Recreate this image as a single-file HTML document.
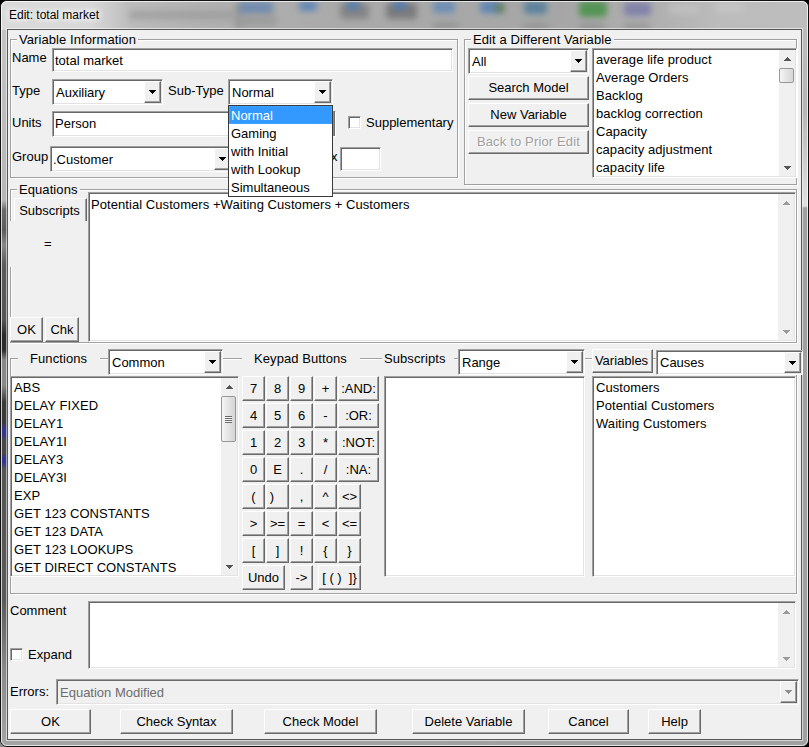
<!DOCTYPE html>
<html>
<head>
<meta charset="utf-8">
<title>Edit: total market</title>
<style>
html,body{margin:0;padding:0;}
body{width:809px;height:747px;position:relative;overflow:hidden;background:#000;font-family:"Liberation Sans",Arial,sans-serif;font-size:13px;color:#000;}
*{box-sizing:border-box;}
.a{position:absolute;}
#frame{left:0;top:0;width:809px;height:747px;background:#b4b4b4;border-radius:7px;overflow:hidden;border:1px solid #111;}
#frame .tb{left:0;top:0;width:807px;height:29px;background:linear-gradient(90deg,#dadada 0,#d8d8d8 90px,#bcbcbc 130px,#b2b2b2 200px,#aaaaaa 330px,#a6a6a6 560px,#b0b0b0 660px,#bcbcbc 720px,#bdbdbd 100%);}
#frame .bl{filter:blur(3px);border-radius:4px;opacity:.8;}
#frame .lf{left:0;top:29px;width:7px;height:716px;background:linear-gradient(180deg,#c4c4c4 0,#b6b6b6 170px,#6a6a6a 180px,#5c5c5c 200px,#888 215px,#5a5a5a 235px,#555 290px,#2a2a2a 305px,#2a2a2a 320px,#888 330px,#8a8a8a 355px,#3a3a3a 372px,#3a3a3a 392px,#35358c 399px,#35358c 404px,#484848 411px,#484848 423px,#35358c 428px,#35358c 432px,#555 440px,#5a5a5a 570px,#8a8a8a 640px,#a4a4a4 100%);}
#frame .rf{left:800px;top:29px;width:7px;height:716px;background:linear-gradient(180deg,#bcbcbc 0,#b6b6b6 80px,#dcdcdc 165px,#e0e0e0 176px,#a0a0a0 178px,#a0a0a0 100%);}
#frame .bf{left:0;top:738px;width:807px;height:7px;background:linear-gradient(90deg,#a4a4a4,#a0a0a0);}
#frame .hl{left:0;top:0;width:807px;height:745px;border:1px solid rgba(255,255,255,.72);border-radius:6px;}
#title{letter-spacing:0;left:9px;top:7px;font-size:12px;line-height:16px;color:#000;white-space:nowrap;text-shadow:0 0 6px #fff,0 0 6px #fff,0 0 8px #fff;}
#client{left:7px;top:29px;width:795px;height:711px;border:1px solid #565656;background:#f0f0f0;box-shadow:0 0 0 1px rgba(255,255,255,.55);}
.t{position:absolute;white-space:nowrap;line-height:16px;height:16px;}
/* sunken edit */
.ed{position:absolute;background:#fff;border-top:1px solid #a0a0a0;border-left:1px solid #a0a0a0;border-right:1px solid #fff;border-bottom:1px solid #fff;box-shadow:inset 1px 1px 0 #696969,inset -1px -1px 0 #e3e3e3;}
.ed .t{left:2px;letter-spacing:0;}
.lb .t{left:3px;letter-spacing:.07px;}
#dd{letter-spacing:0;}
/* 3d button */
.b{position:absolute;background:#f0f0f0;border-top:1px solid #fff;border-left:1px solid #fff;border-right:1px solid #696969;border-bottom:1px solid #696969;box-shadow:inset -1px -1px 0 #a0a0a0;text-align:center;white-space:nowrap;}
.b span{position:absolute;left:0;right:0;text-align:center;line-height:16px;}
.dis{color:#a0a0a0;text-shadow:1px 1px 0 #fff;letter-spacing:0.15px;}
/* group box */
.g{position:absolute;border:1px solid #a0a0a0;box-shadow:inset 1px 1px 0 #fff,1px 1px 0 #fff;}
.gl{letter-spacing:.08px;position:absolute;background:#f0f0f0;white-space:nowrap;line-height:16px;height:16px;padding:0 2px;}
/* combo arrow button */
.ab{position:absolute;width:17px;background:#f0f0f0;border-top:1px solid #fff;border-left:1px solid #fff;border-right:1px solid #696969;border-bottom:1px solid #696969;box-shadow:inset -1px -1px 0 #a0a0a0;}
.ab:after{content:"";position:absolute;left:4px;top:8px;width:7px;height:4px;background:linear-gradient(#000,#000) 0 0/7px 1px no-repeat,linear-gradient(#000,#000) 1px 1px/5px 1px no-repeat,linear-gradient(#000,#000) 2px 2px/3px 1px no-repeat,linear-gradient(#000,#000) 3px 3px/1px 1px no-repeat;}

.ck{position:absolute;width:13px;height:13px;background:#fff;border-top:1px solid #a0a0a0;border-left:1px solid #a0a0a0;border-right:1px solid #fff;border-bottom:1px solid #fff;box-shadow:inset 1px 1px 0 #696969,inset -1px -1px 0 #e3e3e3;}
.sb{position:absolute;width:16px;background:#f0f0f0;}
.sb i{position:absolute;left:0;width:16px;display:block;}
.sb .up{top:0;height:17px;}
.sb .dn{bottom:0;height:17px;}
.sb .up:after{content:"";position:absolute;left:5px;top:7px;width:7px;height:4px;background:linear-gradient(#555,#555) 3px 0/1px 1px no-repeat,linear-gradient(#555,#555) 2px 1px/3px 1px no-repeat,linear-gradient(#555,#555) 1px 2px/5px 1px no-repeat,linear-gradient(#555,#555) 0 3px/7px 1px no-repeat;}
.sb .dn:after{content:"";position:absolute;left:5px;top:7px;width:7px;height:4px;background:linear-gradient(#555,#555) 0 0/7px 1px no-repeat,linear-gradient(#555,#555) 1px 1px/5px 1px no-repeat,linear-gradient(#555,#555) 2px 2px/3px 1px no-repeat,linear-gradient(#555,#555) 3px 3px/1px 1px no-repeat;}
.sb .off:after{opacity:.55;}
.sb .th{left:0;width:15px;border:1px solid #979797;border-radius:2px;background:linear-gradient(90deg,#f5f5f5,#e4e4e4 50%,#d6d6d6);}
.sb .grip:after{content:"";position:absolute;left:3px;top:19px;width:7px;height:7px;background:repeating-linear-gradient(180deg,#6a6a6a 0,#6a6a6a 1px,rgba(255,255,255,.6) 1px,rgba(255,255,255,.6) 2px);}
.ab.gray:after{opacity:.4;}
</style>
</head>
<body>
<div class="a" style="left:0;top:740px;width:7px;height:7px;background:#8c8c8c;"></div>
<div id="frame" class="a">
  <div class="a tb"></div>
  <div class="a bl" style="left:128px;top:10px;width:105px;height:8px;background:#9a9a9a;"></div>
  <div class="a bl" style="left:234px;top:2px;width:8px;height:26px;background:#959595;"></div>
  <div class="a bl" style="left:238px;top:0px;width:34px;height:14px;background:#6585b0;"></div>
  <div class="a bl" style="left:668px;top:3px;width:30px;height:10px;background:#c2c2c2;"></div>
  <div class="a bl" style="left:236px;top:13px;width:40px;height:13px;background:#9a9a9a;"></div>
  <div class="a bl" style="left:298px;top:0px;width:18px;height:10px;background:#4f7fb8;"></div>
  <div class="a bl" style="left:339px;top:2px;width:29px;height:16px;background:#7d7d7d;"></div>
  <div class="a bl" style="left:345px;top:0px;width:14px;height:9px;background:#4a7ab5;"></div>
  <div class="a bl" style="left:385px;top:2px;width:31px;height:16px;background:#707070;"></div>
  <div class="a bl" style="left:392px;top:0px;width:14px;height:9px;background:#4a7ab5;"></div>
  <div class="a bl" style="left:432px;top:0px;width:22px;height:12px;background:#5f88b8;"></div>
  <div class="a bl" style="left:432px;top:22px;width:26px;height:5px;background:#8a8a8a;"></div>
  <div class="a bl" style="left:479px;top:0px;width:20px;height:12px;background:#4f7fb8;"></div>
  <div class="a bl" style="left:494px;top:2px;width:10px;height:10px;background:#5a7a50;"></div>
  <div class="a bl" style="left:523px;top:0px;width:23px;height:13px;background:#4a7a9a;"></div>
  <div class="a bl" style="left:522px;top:23px;width:26px;height:5px;background:#8a8a8a;"></div>
  <div class="a bl" style="left:578px;top:0px;width:28px;height:16px;background:#3f8f3f;"></div>
  <div class="a bl" style="left:578px;top:23px;width:26px;height:5px;background:#8a8a8a;"></div>
  <div class="a bl" style="left:623px;top:1px;width:27px;height:14px;background:#7878aa;"></div>
  <div class="a bl" style="left:623px;top:23px;width:26px;height:5px;background:#8a8a8a;"></div>
  <div class="a bl" style="left:715px;top:2px;width:28px;height:9px;background:#c8c8c8;"></div>
  <div class="a lf"></div>
  <div class="a rf"></div>
  <div class="a bf"></div>
  <div class="a hl"></div>
</div>
<div id="title" class="a">Edit: total market</div>
<div id="client" class="a"></div>

<!-- Variable Information -->
<div class="g" style="left:10px;top:39px;width:448px;height:139px;"></div>
<div class="gl" style="left:17px;top:32px;">Variable Information</div>
<div class="t" style="left:12px;top:50px;">Name</div>
<div class="ed" style="left:52px;top:48px;width:401px;height:24px;"><div class="t" style="top:4px;">total market</div></div>
<div class="t" style="left:12px;top:83px;">Type</div>
<div class="ed" style="left:52px;top:79px;width:111px;height:26px;"><div class="t" style="top:5px;left:3px;">Auxiliary</div><div class="ab" style="right:1px;top:1px;height:22px;"></div></div>
<div class="t" style="left:168px;top:83px;">Sub-Type</div>
<div class="ed" style="left:228px;top:79px;width:105px;height:26px;"><div class="t" style="top:5px;left:3px;">Normal</div><div class="ab" style="right:1px;top:1px;height:22px;"></div></div>
<div class="t" style="left:12px;top:115px;">Units</div>
<div class="ed" style="left:52px;top:111px;width:284px;height:26px;"><div class="t" style="top:4px;">Person</div></div>
<div class="a" style="left:333px;top:111px;width:2px;height:25px;background:linear-gradient(90deg,#8a8a8a 50%,#707070 50%);"></div>
<div class="ck" style="left:348px;top:116px;"></div>
<div class="t" style="left:366px;top:115px;">Supplementary</div>
<div class="t" style="left:12px;top:149px;">Group</div>
<div class="ed" style="left:50px;top:146px;width:183px;height:26px;"><div class="t" style="top:5px;">.Customer</div><div class="ab" style="right:1px;top:1px;height:22px;"></div></div>
<div class="t" style="left:313px;top:149px;">Max</div>
<div class="ed" style="left:340px;top:147px;width:41px;height:24px;"></div>

<!-- Edit a Different Variable -->
<div class="g" style="left:464px;top:39px;width:333px;height:146px;"></div>
<div class="gl" style="left:471px;top:32px;letter-spacing:0.1px;">Edit a Different Variable</div>
<div class="ed" style="left:468px;top:48px;width:121px;height:26px;"><div class="t" style="top:5px;left:3px;">All</div><div class="ab" style="right:1px;top:1px;height:22px;"></div></div>
<div class="b" style="left:468px;top:76px;width:121px;height:24px;"><span style="top:3px;">Search Model</span></div>
<div class="b" style="left:468px;top:103px;width:121px;height:24px;"><span style="top:3px;">New Variable</span></div>
<div class="b dis" style="left:468px;top:130px;width:121px;height:24px;"><span style="top:3px;">Back to Prior Edit</span></div>
<div class="ed lb" style="left:592px;top:48px;width:205px;height:130px;overflow:hidden;">
  <div class="t" style="top:3px;">average life product</div>
  <div class="t" style="top:21px;">Average Orders</div>
  <div class="t" style="top:39px;">Backlog</div>
  <div class="t" style="top:57px;">backlog correction</div>
  <div class="t" style="top:75px;">Capacity</div>
  <div class="t" style="top:93px;">capacity adjustment</div>
  <div class="t" style="top:111px;">capacity life</div>
  <div class="sb" style="right:1px;top:1px;bottom:1px;"><i class="up"></i><i class="th" style="top:18px;height:15px;"></i><i class="dn"></i></div>
</div>

<!-- Equations -->
<div class="g" style="left:10px;top:189px;width:787px;height:154px;"></div>
<div class="gl" style="left:17px;top:182px;">Equations</div>
<div class="a" style="left:10px;top:221px;width:3px;height:46px;background:#f0f0f0;"></div>
<div class="b" style="left:14px;top:198px;width:73px;height:23px;border-bottom:0;box-shadow:inset -1px 0 0 #a0a0a0;"><span style="top:4px;left:-2px;">Subscripts</span></div>
<div class="t" style="left:44px;top:236px;">=</div>
<div class="b" style="left:10px;top:317px;width:33px;height:25px;"><span style="top:4px;">OK</span></div>
<div class="b" style="left:45px;top:317px;width:34px;height:25px;"><span style="top:4px;">Chk</span></div>
<div class="ed" style="left:88px;top:192px;width:708px;height:150px;">
  <div class="t" style="top:4px;letter-spacing:.065px;">Potential Customers +Waiting Customers + Customers</div>
  <div class="sb" style="right:1px;top:1px;bottom:1px;"><i class="up off"></i><i class="dn off"></i></div>
</div>

<!-- lower group -->
<div class="g" style="left:10px;top:358px;width:787px;height:236px;"></div>
<div class="gl" style="left:18px;top:351px;padding:0 13px 0 12px;">Functions</div>
<div class="ed" style="left:108px;top:349px;width:115px;height:26px;"><div class="t" style="top:5px;left:3px;">Common</div><div class="ab" style="right:1px;top:1px;height:22px;"></div></div>
<div class="gl" style="left:242px;top:351px;padding:0 13px 0 12px;">Keypad Buttons</div>
<div class="gl" style="left:382px;top:351px;padding-right:8px;">Subscripts</div>
<div class="ed" style="left:458px;top:349px;width:127px;height:26px;"><div class="t" style="top:5px;left:3px;">Range</div><div class="ab" style="right:1px;top:1px;height:22px;"></div></div>
<div class="b" style="left:592px;top:349px;width:61px;height:24px;"><span style="top:3px;left:-2px;">Variables</span></div>
<div class="ed" style="left:656px;top:350px;width:147px;height:25px;"><div class="t" style="top:4px;left:3px;">Causes</div><div class="ab" style="right:1px;top:1px;height:21px;"></div></div>

<div class="ed lb" style="left:10px;top:376px;width:229px;height:201px;overflow:hidden;">
  <div class="t" style="top:3px;">ABS</div>
  <div class="t" style="top:21px;">DELAY FIXED</div>
  <div class="t" style="top:39px;">DELAY1</div>
  <div class="t" style="top:57px;">DELAY1I</div>
  <div class="t" style="top:75px;">DELAY3</div>
  <div class="t" style="top:93px;">DELAY3I</div>
  <div class="t" style="top:111px;">EXP</div>
  <div class="t" style="top:129px;">GET 123 CONSTANTS</div>
  <div class="t" style="top:147px;">GET 123 DATA</div>
  <div class="t" style="top:165px;">GET 123 LOOKUPS</div>
  <div class="t" style="top:183px;">GET DIRECT CONSTANTS</div>
  <div class="sb" style="right:1px;top:1px;bottom:1px;"><i class="up"></i><i class="th grip" style="top:18px;height:46px;"></i><i class="dn"></i></div>
</div>

<!-- keypad -->
<div class="b" style="left:242px;top:376px;width:23px;height:25px;"><span style="top:4px;">7</span></div>
<div class="b" style="left:266px;top:376px;width:23px;height:25px;"><span style="top:4px;">8</span></div>
<div class="b" style="left:290px;top:376px;width:23px;height:25px;"><span style="top:4px;">9</span></div>
<div class="b" style="left:314px;top:376px;width:23px;height:25px;"><span style="top:4px;">+</span></div>
<div class="b" style="left:338px;top:376px;width:41px;height:25px;"><span style="top:4px;">:AND:</span></div>
<div class="b" style="left:242px;top:403px;width:23px;height:25px;"><span style="top:4px;">4</span></div>
<div class="b" style="left:266px;top:403px;width:23px;height:25px;"><span style="top:4px;">5</span></div>
<div class="b" style="left:290px;top:403px;width:23px;height:25px;"><span style="top:4px;">6</span></div>
<div class="b" style="left:314px;top:403px;width:23px;height:25px;"><span style="top:4px;">-</span></div>
<div class="b" style="left:338px;top:403px;width:41px;height:25px;"><span style="top:4px;">:OR:</span></div>
<div class="b" style="left:242px;top:430px;width:23px;height:25px;"><span style="top:4px;">1</span></div>
<div class="b" style="left:266px;top:430px;width:23px;height:25px;"><span style="top:4px;">2</span></div>
<div class="b" style="left:290px;top:430px;width:23px;height:25px;"><span style="top:4px;">3</span></div>
<div class="b" style="left:314px;top:430px;width:23px;height:25px;"><span style="top:4px;">*</span></div>
<div class="b" style="left:338px;top:430px;width:41px;height:25px;"><span style="top:4px;">:NOT:</span></div>
<div class="b" style="left:242px;top:457px;width:23px;height:25px;"><span style="top:4px;">0</span></div>
<div class="b" style="left:266px;top:457px;width:23px;height:25px;"><span style="top:4px;">E</span></div>
<div class="b" style="left:290px;top:457px;width:23px;height:25px;"><span style="top:4px;">.</span></div>
<div class="b" style="left:314px;top:457px;width:23px;height:25px;"><span style="top:4px;">/</span></div>
<div class="b" style="left:338px;top:457px;width:41px;height:25px;"><span style="top:4px;">:NA:</span></div>
<div class="b" style="left:242px;top:484px;width:23px;height:25px;"><span style="top:4px;">(</span></div>
<div class="b" style="left:266px;top:484px;width:23px;height:25px;"><span style="top:4px;left:-11px;">)</span></div>
<div class="b" style="left:290px;top:484px;width:23px;height:25px;"><span style="top:4px;">,</span></div>
<div class="b" style="left:314px;top:484px;width:23px;height:25px;"><span style="top:4px;">^</span></div>
<div class="b" style="left:338px;top:484px;width:23px;height:25px;"><span style="top:4px;">&lt;&gt;</span></div>
<div class="b" style="left:242px;top:511px;width:23px;height:25px;"><span style="top:4px;">&gt;</span></div>
<div class="b" style="left:266px;top:511px;width:23px;height:25px;"><span style="top:4px;">&gt;=</span></div>
<div class="b" style="left:290px;top:511px;width:23px;height:25px;"><span style="top:4px;">=</span></div>
<div class="b" style="left:314px;top:511px;width:23px;height:25px;"><span style="top:4px;">&lt;</span></div>
<div class="b" style="left:338px;top:511px;width:23px;height:25px;"><span style="top:4px;">&lt;=</span></div>
<div class="b" style="left:242px;top:538px;width:23px;height:25px;"><span style="top:4px;">[</span></div>
<div class="b" style="left:266px;top:538px;width:23px;height:25px;"><span style="top:4px;">]</span></div>
<div class="b" style="left:290px;top:538px;width:23px;height:25px;"><span style="top:4px;">!</span></div>
<div class="b" style="left:314px;top:538px;width:23px;height:25px;"><span style="top:4px;">{</span></div>
<div class="b" style="left:338px;top:538px;width:23px;height:25px;"><span style="top:4px;">}</span></div>
<div class="b" style="left:242px;top:565px;width:43px;height:25px;"><span style="top:4px;">Undo</span></div>
<div class="b" style="left:290px;top:565px;width:23px;height:25px;"><span style="top:4px;">-&gt;</span></div>
<div class="b" style="left:318px;top:565px;width:43px;height:25px;"><span style="top:4px;">[ ( )&nbsp; ]}</span></div>

<div class="ed" style="left:384px;top:376px;width:201px;height:201px;"></div>
<div class="ed lb" style="left:592px;top:376px;width:204px;height:201px;">
  <div class="t" style="top:3px;">Customers</div>
  <div class="t" style="top:21px;">Potential Customers</div>
  <div class="t" style="top:39px;">Waiting Customers</div>
</div>

<!-- comment -->
<div class="t" style="left:10px;top:603px;">Comment</div>
<div class="ed" style="left:88px;top:601px;width:708px;height:68px;">
  <div class="sb" style="right:1px;top:1px;bottom:1px;"><i class="up off"></i><i class="dn off"></i></div>
</div>
<div class="ck" style="left:10px;top:648px;"></div>
<div class="t" style="left:28px;top:647px;">Expand</div>
<div class="t" style="left:10px;top:684px;">Errors:</div>
<div class="ed" style="left:56px;top:679px;width:743px;height:26px;background:#f0f0f0;"><div class="t" style="top:5px;left:3px;color:#6d6d6d;">Equation Modified</div><div class="ab gray" style="right:1px;top:1px;height:22px;"></div></div>

<div class="b" style="left:10px;top:709px;width:81px;height:25px;"><span style="top:4px;">OK</span></div>
<div class="b" style="left:120px;top:709px;width:113px;height:25px;"><span style="top:4px;">Check Syntax</span></div>
<div class="b" style="left:264px;top:709px;width:113px;height:25px;"><span style="top:4px;">Check Model</span></div>
<div class="b" style="left:412px;top:709px;width:113px;height:25px;"><span style="top:4px;">Delete Variable</span></div>
<div class="b" style="left:548px;top:709px;width:81px;height:25px;"><span style="top:4px;">Cancel</span></div>
<div class="b" style="left:648px;top:709px;width:53px;height:25px;"><span style="top:4px;">Help</span></div>

<!-- dropdown list -->
<div class="a" id="dd" style="left:228px;top:105px;width:105px;height:92px;background:#fff;border:1px solid #3a3a3a;">
  <div class="t" style="left:0;top:0;width:103px;height:18px;background:#3399ff;color:#fff;outline:1px dotted #e08a30;outline-offset:-1px;"><span style="position:absolute;left:2px;top:2px;">Normal</span></div>
  <div class="t" style="left:2px;top:20px;">Gaming</div>
  <div class="t" style="left:2px;top:38px;">with Initial</div>
  <div class="t" style="left:2px;top:56px;">with Lookup</div>
  <div class="t" style="left:2px;top:74px;">Simultaneous</div>
</div>

</body>
</html>
